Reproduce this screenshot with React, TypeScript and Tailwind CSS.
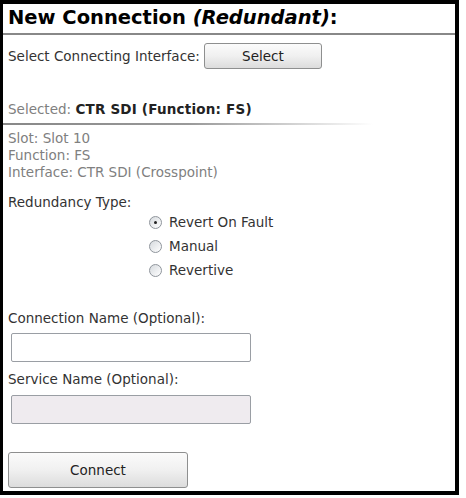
import React from 'react';

// ── Small pieces ──────────────────────────────────────────────────────────

function Radio({ checked }: { checked?: boolean }) {
  return (
    <span className="relative flex h-[13px] w-[13px] shrink-0 items-center justify-center rounded-full border border-[#8f959c] bg-gradient-to-br from-[#d6dade] to-white">
      {checked && <span className="h-[3px] w-[3px] rounded-full bg-[#222]" />}
    </span>
  );
}

function GlossButton({ label, className }: { label: string; className: string }) {
  return (
    <button
      type="button"
      className={`rounded-[3px] border border-[#8e8f8f] bg-gradient-to-b from-[#fbfbfb] via-[#f0f0f0] to-[#dcdcdc] text-[13.5px] text-[#222] ${className}`}
    >
      {label}
    </button>
  );
}

// ── App ───────────────────────────────────────────────────────────────────

export default function App() {
  const options = ['Revert On Fault', 'Manual', 'Revertive'];

  return (
    <div className="h-[498px] w-[466px] bg-white font-['DejaVu_Sans',Verdana,sans-serif]">
      <div className="flex h-[495px] w-[459px] flex-col border-4 border-l-[3px] border-black bg-white text-[13.5px]">
        {/* Title */}
        <div className="h-[31px] border-b-2 border-[#888] pl-[5px] pt-[1px]">
          <h1 className="text-[19.5px] font-bold leading-[26px] text-black">
            New Connection <i>(Redundant)</i>:
          </h1>
        </div>

        {/* Interface picker */}
        <div className="mt-[8px] flex items-center gap-[4px] pl-[5px]">
          <span className="text-[#333]">Select Connecting Interface:</span>
          <GlossButton label="Select" className="h-[26px] w-[118px]" />
        </div>

        <div className="mt-[32px] pl-[5px] leading-[17px] text-[#808080]">
          Selected: <b className="tracking-[0.2px] text-[#222]">CTR SDI (Function: FS)</b>
        </div>
        <div className="mt-[5px] h-[2px] w-[370px] bg-gradient-to-r from-[#888] via-[#999] to-white" />

        <div className="mt-[5px] flex flex-col pl-[5px] leading-[17px] text-[#808080]">
          <span>Slot: Slot 10</span>
          <span>Function: FS</span>
          <span>Interface: CTR SDI (Crosspoint)</span>
        </div>

        {/* Redundancy */}
        <div className="mt-[13px] flex pl-[5px] text-[#333]">
          <span className="w-[141px] leading-[17px]">Redundancy Type:</span>
          <div className="mt-[20px] flex flex-col gap-[8px]">
            {options.map((o, i) => (
              <label key={o} className="flex h-[16px] items-center gap-[7px]">
                <Radio checked={i === 0} />
                <span>{o}</span>
              </label>
            ))}
          </div>
        </div>

        {/* Names */}
        <div className="mt-[32px] pl-[5px] leading-[17px] text-[#333]">
          Connection Name (Optional):
        </div>
        <input
          type="text"
          className="ml-[8px] mt-[6px] h-[29px] w-[240px] rounded-[2px] border border-[#9a9ea4] bg-white outline-none"
        />
        <div className="mt-[9px] pl-[5px] leading-[17px] text-[#333]">
          Service Name (Optional):
        </div>
        <input
          type="text"
          disabled
          className="ml-[8px] mt-[7px] h-[29px] w-[240px] rounded-[2px] border border-[#9a9ea4] bg-[#efebef] outline-none"
        />

        <GlossButton label="Connect" className="ml-[5px] mt-[28px] h-[36px] w-[180px]" />
      </div>
    </div>
  );
}
